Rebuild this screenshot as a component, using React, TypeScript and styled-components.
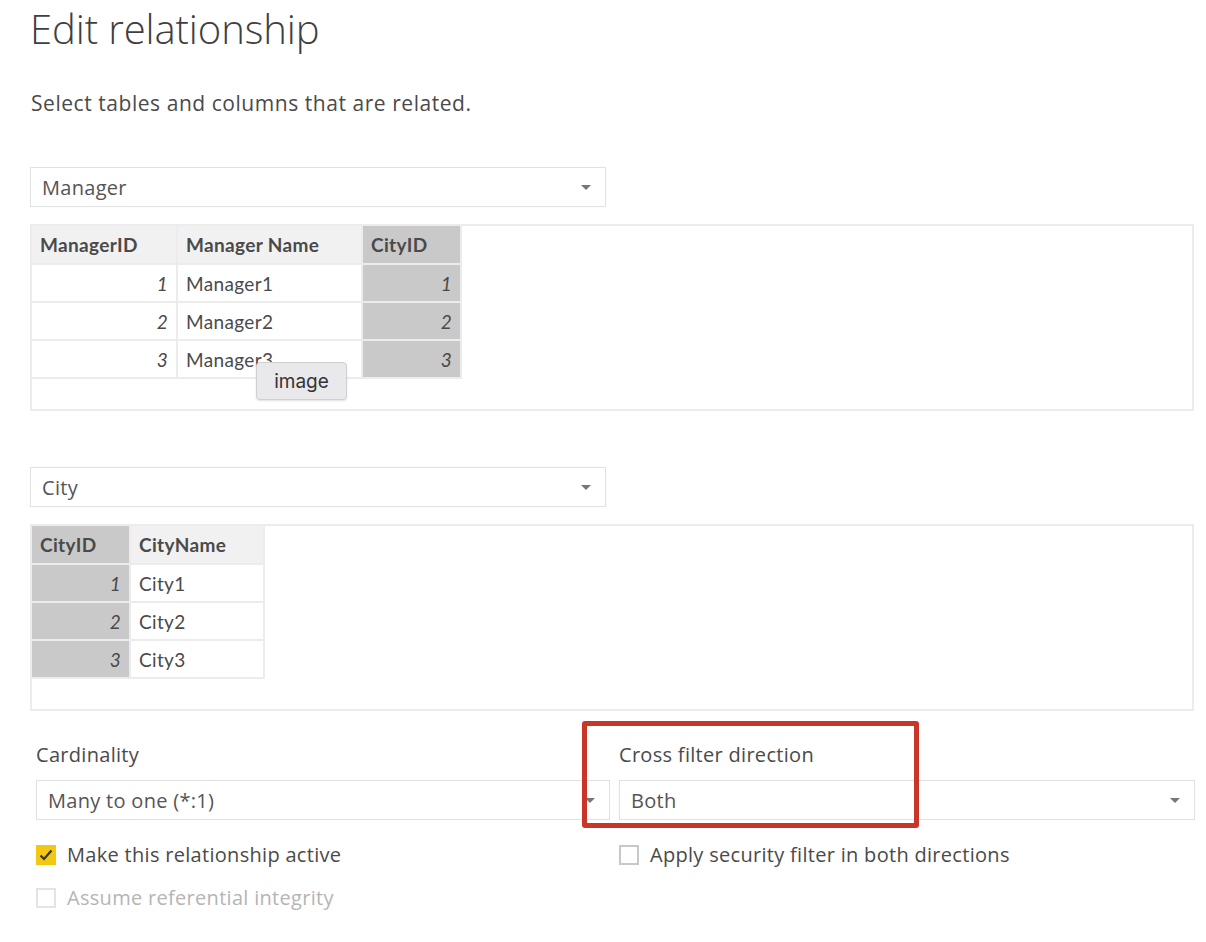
import React from 'react'
import styled, { createGlobalStyle } from 'styled-components'

const GlobalStyle = createGlobalStyle`
  body {
    margin: 0;
    background: #ffffff;
    font-family: 'Open Sans', 'Liberation Sans', sans-serif;
    color: #444;
  }
`

const Page = styled.div`
  position: relative;
  width: 1206px;
  height: 942px;
  padding: 0 12px 0 30px;
  box-sizing: border-box;
`

const Title = styled.h1`
  margin: 0;
  padding-top: 2px;
  font-size: 40px;
  font-weight: 300;
  color: #3f3f3f;
  line-height: 54px;
  letter-spacing: -0.1px;
`

const Subtitle = styled.p`
  margin: 33px 0 0 1px;
  font-size: 21px;
  line-height: 28px;
  letter-spacing: 0.55px;
  color: #4a4a4a;
`

const Section = styled.div<{ gap: number }>`
  margin-top: ${(p) => p.gap}px;
`

const Select = styled.div<{ width: number }>`
  width: ${(p) => p.width}px;
  height: 40px;
  box-sizing: border-box;
  border: 1px solid #e2e2e2;
  box-shadow: 0 0 1px rgba(0, 0, 0, 0.06);
  display: flex;
  align-items: center;
  justify-content: space-between;
  padding: 0 14px 0 11px;
  font-size: 20px;
  letter-spacing: 0.3px;
  color: #555;
  background: #fff;
`

const Caret = styled.span`
  width: 0;
  height: 0;
  border-left: 5px solid transparent;
  border-right: 5px solid transparent;
  border-top: 5px solid #777;
`

const Panel = styled.div`
  margin-top: 17px;
  height: 187px;
  box-sizing: border-box;
  border: 2px solid #ececec;
`

const Table = styled.table`
  border-collapse: collapse;
  font-family: 'Lato', 'Open Sans', sans-serif;
  font-size: 19px;
  letter-spacing: 0.35px;
  color: #444;
`

const Th = styled.th<{ w: number; selected?: boolean }>`
  width: ${(p) => p.w}px;
  height: 38px;
  box-sizing: border-box;
  text-align: left;
  padding: 0 8px;
  font-weight: 700;
  background: ${(p) => (p.selected ? '#c9c9c9' : '#f1f1f1')};
  border: 2px solid #ececec;
  border-top: none;
  border-left: none;
  color: #4a4a4a;
`

const Td = styled.td<{ num?: boolean; selected?: boolean }>`
  height: 38px;
  box-sizing: border-box;
  padding: 0 8px;
  text-align: ${(p) => (p.num ? 'right' : 'left')};
  font-style: ${(p) => (p.num ? 'italic' : 'normal')};
  background: ${(p) => (p.selected ? '#c9c9c9' : '#fff')};
  border: 2px solid #ececec;
  border-left: none;
  color: #4a4a4a;
`

const Tooltip = styled.div`
  position: absolute;
  left: 256px;
  top: 362px;
  width: 91px;
  height: 38px;
  box-sizing: border-box;
  background: #e9e9eb;
  border: 1px solid #d0d0d0;
  border-radius: 4px;
  box-shadow: 0 1px 2px rgba(0, 0, 0, 0.12);
  display: flex;
  align-items: center;
  justify-content: center;
  font-family: 'Inter', 'Open Sans', sans-serif;
  font-size: 19px;
  color: #333;
`

const Options = styled.div`
  position: relative;
  margin-top: 31px;
  display: grid;
  grid-template-columns: 574px 576px;
  column-gap: 9px;
  padding-left: 6px;
`

const Field = styled.div`
  display: flex;
  flex-direction: column;
`

const Label = styled.div`
  font-size: 20px;
  line-height: 26px;
  letter-spacing: 0.3px;
  color: #4a4a4a;
  margin-bottom: 12px;
`

const Checks = styled.div`
  display: flex;
  flex-direction: column;
  gap: 17px;
  margin-top: 22px;
`

const CheckRow = styled.div<{ disabled?: boolean }>`
  display: flex;
  align-items: center;
  gap: 11px;
  font-size: 20px;
  line-height: 26px;
  letter-spacing: 0.3px;
  color: ${(p) => (p.disabled ? '#b5b5b5' : '#4a4a4a')};
`

const Box = styled.span<{ checked?: boolean; disabled?: boolean }>`
  width: 20px;
  height: 20px;
  flex-shrink: 0;
  box-sizing: border-box;
  border: ${(p) => (p.checked ? 'none' : `2px solid ${p.disabled ? '#e4e4e4' : '#c8c8c8'}`)};
  background: ${(p) => (p.checked ? '#f2c811' : '#fff')};
  display: flex;
  align-items: center;
  justify-content: center;
`

const Highlight = styled.div`
  position: absolute;
  left: 552px;
  top: -21px;
  width: 337px;
  height: 107px;
  box-sizing: border-box;
  border: 5px solid #c8362a;
  border-radius: 3px;
  pointer-events: none;
`

const Check = () => (
  <svg width="14" height="12" viewBox="0 0 14 12">
    <path d="M1.5 6.5 L5 10 L12.5 1.5" fill="none" stroke="#333" strokeWidth="2.2" />
  </svg>
)

type Col = { name: string; w: number; num?: boolean; selected?: boolean }

const DataTable: React.FC<{ cols: Col[]; rows: string[][] }> = ({ cols, rows }) => (
  <Table>
    <thead>
      <tr>
        {cols.map((c) => (
          <Th key={c.name} w={c.w} selected={c.selected}>
            {c.name}
          </Th>
        ))}
      </tr>
    </thead>
    <tbody>
      {rows.map((r, i) => (
        <tr key={i}>
          {r.map((v, j) => (
            <Td key={j} num={cols[j].num} selected={cols[j].selected}>
              {v}
            </Td>
          ))}
        </tr>
      ))}
    </tbody>
  </Table>
)

const App: React.FC = () => (
  <Page>
    <GlobalStyle />
    <Title>Edit relationship</Title>
    <Subtitle>Select tables and columns that are related.</Subtitle>

    <Section gap={50}>
      <Select width={576}>
        Manager
        <Caret />
      </Select>
      <Panel>
        <DataTable
          cols={[
            { name: 'ManagerID', w: 145, num: true },
            { name: 'Manager Name', w: 185 },
            { name: 'CityID', w: 99, num: true, selected: true },
          ]}
          rows={[
            ['1', 'Manager1', '1'],
            ['2', 'Manager2', '2'],
            ['3', 'Manager3', '3'],
          ]}
        />
      </Panel>
    </Section>

    <Section gap={56}>
      <Select width={576}>
        City
        <Caret />
      </Select>
      <Panel>
        <DataTable
          cols={[
            { name: 'CityID', w: 98, num: true, selected: true },
            { name: 'CityName', w: 134 },
          ]}
          rows={[
            ['1', 'City1'],
            ['2', 'City2'],
            ['3', 'City3'],
          ]}
        />
      </Panel>
    </Section>

    <Options>
      <Field>
        <Label>Cardinality</Label>
        <Select width={574}>
          Many to one (*:1)
          <Caret />
        </Select>
        <Checks>
          <CheckRow>
            <Box checked>
              <Check />
            </Box>
            Make this relationship active
          </CheckRow>
          <CheckRow disabled>
            <Box disabled />
            Assume referential integrity
          </CheckRow>
        </Checks>
      </Field>
      <Field>
        <Label>Cross filter direction</Label>
        <Select width={576}>
          Both
          <Caret />
        </Select>
        <Checks>
          <CheckRow>
            <Box />
            Apply security filter in both directions
          </CheckRow>
        </Checks>
      </Field>
      <Highlight />
    </Options>

    <Tooltip>image</Tooltip>
  </Page>
)

export default App
